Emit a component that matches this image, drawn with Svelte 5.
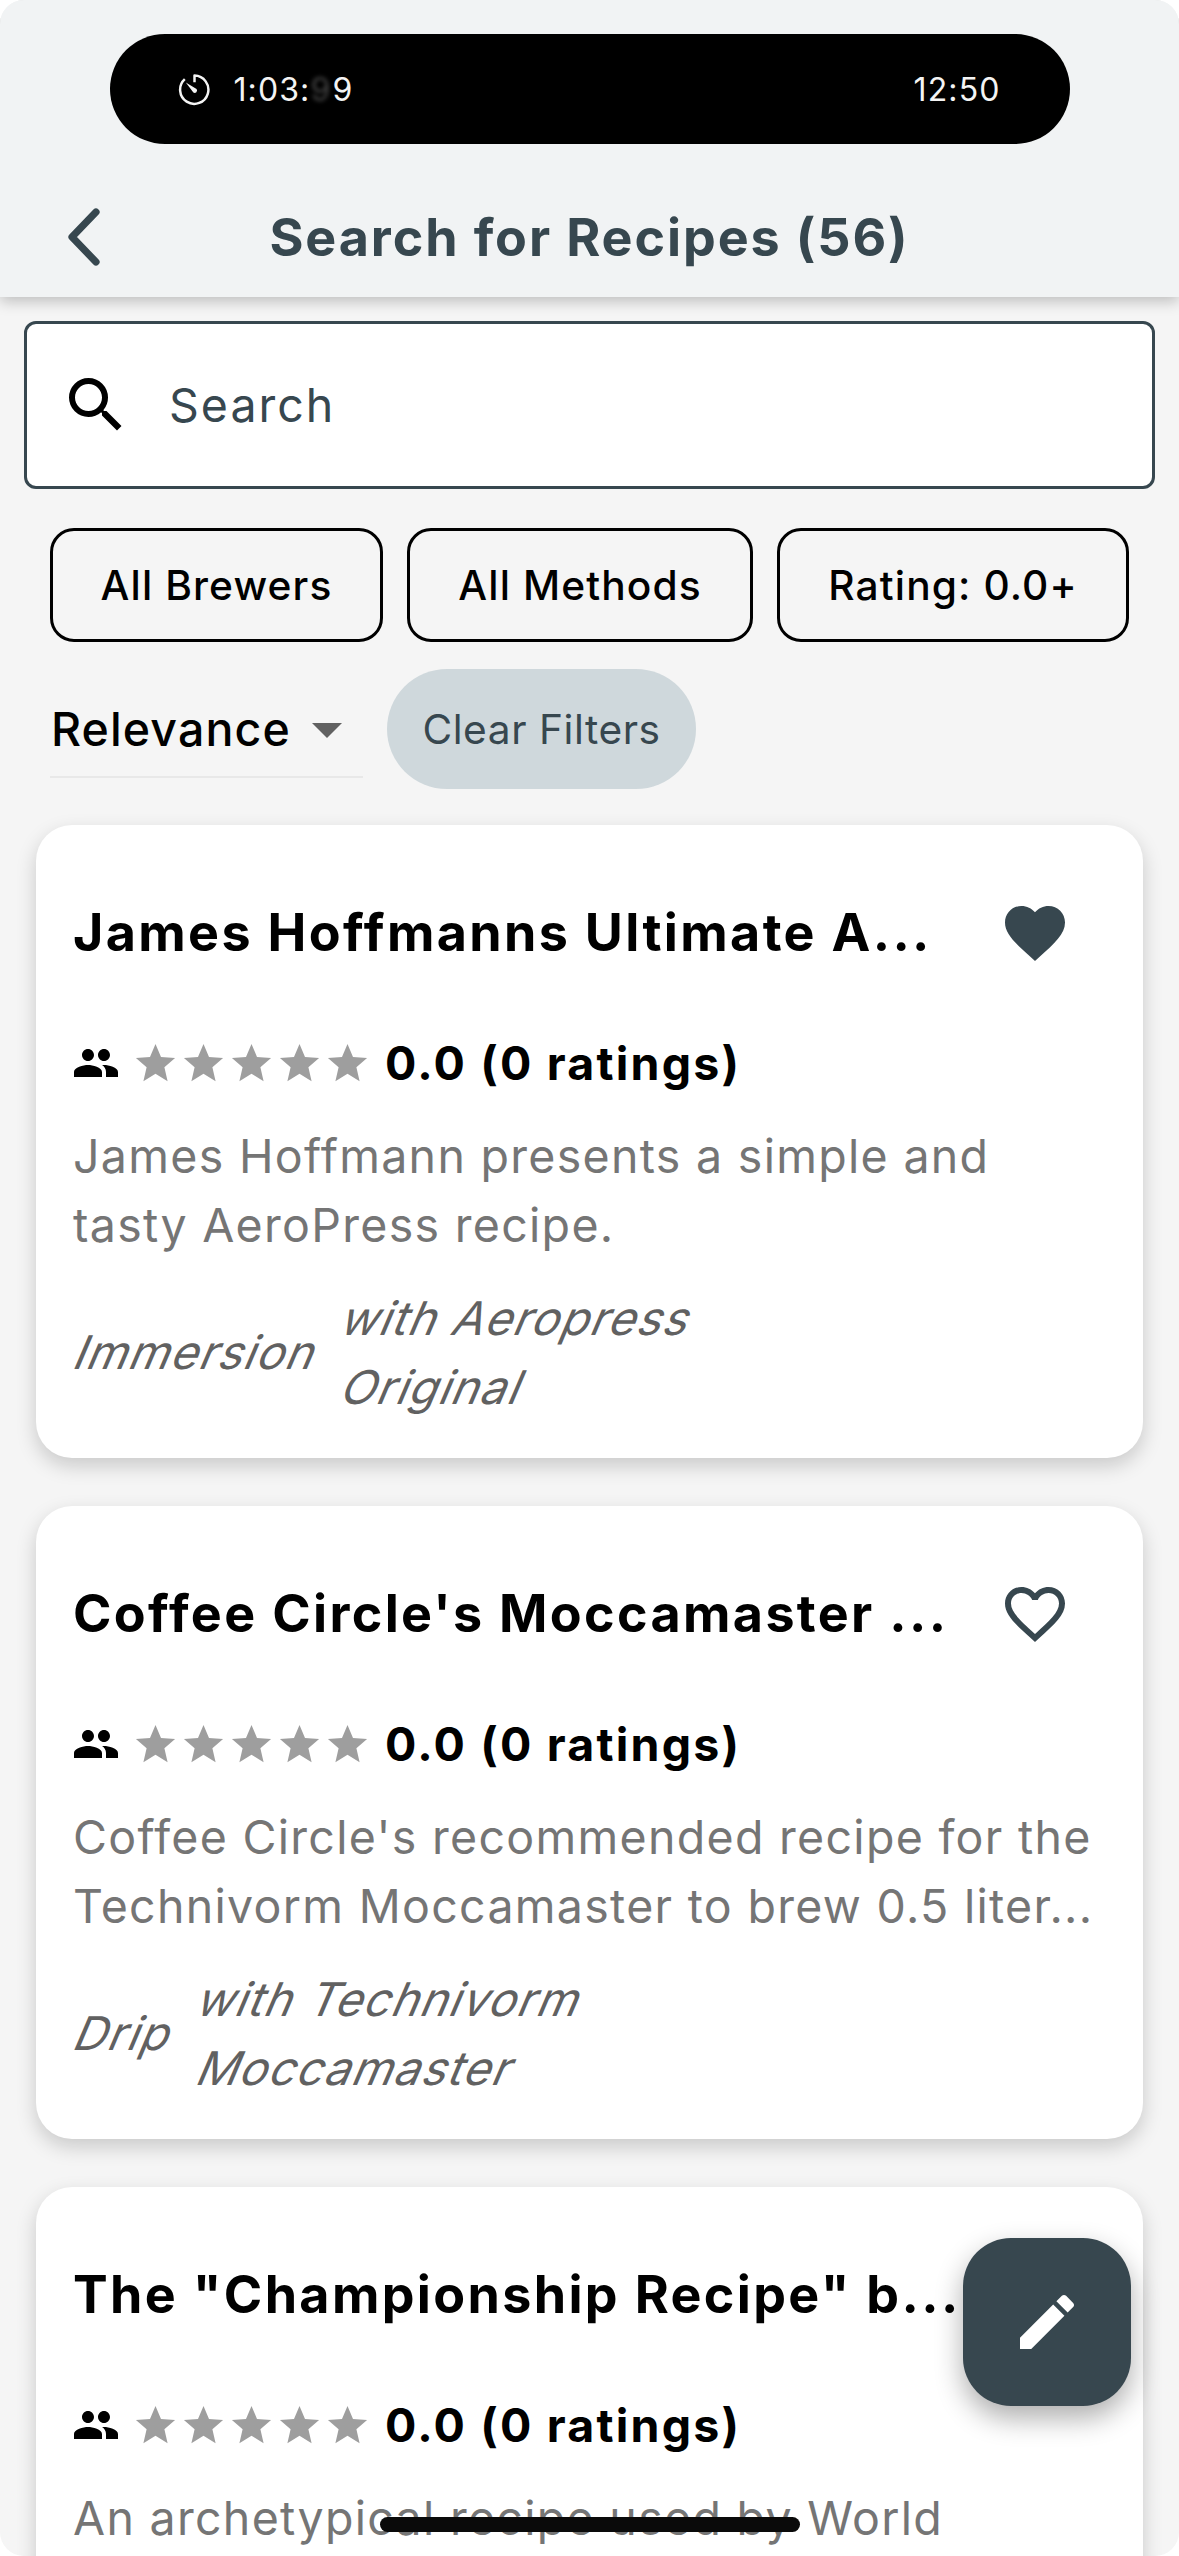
<script>
    let query = ''

    const filters = [
        { name: 'All Brewers', width: 333 },
        { name: 'All Methods', width: 346 },
        { name: 'Rating: 0.0+', width: 352 },
    ]

    const recipes = [
        {
            title: 'James Hoffmanns Ultimate A...',
            liked: true,
            description: ['James Hoffmann presents a simple and', 'tasty AeroPress recipe.'],
            method: 'Immersion',
            brewer: ['with Aeropress', 'Original'],
        },
        {
            title: "Coffee Circle's Moccamaster ...",
            liked: false,
            description: [
                "Coffee Circle's recommended recipe for the",
                'Technivorm Moccamaster to brew 0.5 liter...',
            ],
            method: 'Drip',
            brewer: ['with Technivorm', 'Moccamaster'],
        },
        {
            title: 'The "Championship Recipe" b...',
            liked: false,
            description: ['An archetypical recipe used by World'],
            method: '',
            brewer: [],
        },
    ]
</script>

<div class="screen">
    <header>
        <div class="island">
            <svg class="timer" viewBox="0 0 32 32">
                <path d="M16 9V2.5A13.7 13.7 0 1 1 6.6 6" />
                <path class="hand" d="M7.6 9.3 18 15.6A2.3 2.3 0 0 1 14.9 18.9Z" />
            </svg>
            <span class="elapsed">1:03:<i>9</i>9</span>
            <span class="clock">12:50</span>
        </div>
        <div class="bar">
            <svg class="back" viewBox="0 0 36 60">
                <path d="M30 5 6 30 30 55" />
            </svg>
            <h1>Search for Recipes (56)</h1>
        </div>
    </header>

    <main>
        <label class="search">
            <svg class="icon" viewBox="0 0 24 24">
                <path
                    d="M15.5 14h-.79l-.28-.27A6.471 6.471 0 0 0 16 9.5 6.5 6.5 0 1 0 9.5 16c1.61 0 3.09-.59 4.23-1.57l.27.28v.79l5 4.99L20.49 19l-4.99-5zm-6 0C7.01 14 5 11.99 5 9.5S7.01 5 9.5 5 14 7.01 14 9.5 11.99 14 9.5 14z"
                />
            </svg>
            <input type="text" placeholder="Search" bind:value={query} />
        </label>

        <div class="filters">
            {#each filters as filter}
                <button class="chip" style="width: {filter.width}px">{filter.name}</button>
            {/each}
        </div>

        <div class="sorting">
            <div class="dropdown">
                <span>Relevance</span>
                <svg class="icon" viewBox="0 0 24 24"><path d="M7 10l5 5 5-5z" /></svg>
            </div>
            <button class="clear">Clear Filters</button>
        </div>

        {#each recipes as recipe}
            <article>
                <div class="title">
                    <h2>{recipe.title}</h2>
                    <svg class="icon" viewBox="0 0 24 24">
                        {#if recipe.liked}
                            <path
                                d="M12 21.35l-1.45-1.32C5.4 15.36 2 12.28 2 8.5 2 5.42 4.42 3 7.5 3c1.74 0 3.41.81 4.5 2.09C13.09 3.81 14.76 3 16.5 3 19.58 3 22 5.42 22 8.5c0 3.78-3.4 6.86-8.55 11.54L12 21.35z"
                            />
                        {:else}
                            <path
                                d="M16.5 3c-1.74 0-3.41.81-4.5 2.09C10.91 3.81 9.24 3 7.5 3 4.42 3 2 5.42 2 8.5c0 3.78 3.4 6.86 8.55 11.54L12 21.35l1.45-1.32C18.6 15.36 22 12.28 22 8.5 22 5.42 19.58 3 16.5 3zm-4.4 15.55l-.1.1-.1-.1C7.14 14.24 4 11.39 4 8.5 4 6.5 5.5 5 7.5 5c1.54 0 3.04.99 3.57 2.36h1.87C13.46 5.99 14.96 5 16.5 5c2 0 3.5 1.5 3.5 3.5 0 2.89-3.14 5.74-7.9 10.05z"
                            />
                        {/if}
                    </svg>
                </div>
                <div class="rating">
                    <svg class="people" viewBox="0 0 24 24">
                        <path
                            d="M16 11c1.66 0 2.99-1.34 2.99-3S17.66 5 16 5c-1.66 0-3 1.34-3 3s1.34 3 3 3zm-8 0c1.66 0 2.99-1.34 2.99-3S9.66 5 8 5C6.34 5 5 6.34 5 8s1.34 3 3 3zm0 2c-2.33 0-7 1.17-7 3.5V19h14v-2.5c0-2.33-4.67-3.5-7-3.5zm8 0c-.29 0-.62.02-.97.05 1.16.84 1.97 1.97 1.97 3.45V19h6v-2.5c0-2.33-4.67-3.5-7-3.5z"
                        />
                    </svg>
                    <div class="stars">
                        {#each Array(5) as _}
                            <svg viewBox="0 0 24 24">
                                <path
                                    d="M12 17.27L18.18 21l-1.64-7.03L22 9.24l-7.19-.61L12 2 9.19 8.63 2 9.24l5.46 4.73L5.82 21z"
                                />
                            </svg>
                        {/each}
                    </div>
                    <strong>0.0 (0 ratings)</strong>
                </div>
                <p>
                    {#each recipe.description as line}
                        <span>{line}</span>
                    {/each}
                </p>
                <div class="meta">
                    <em>{recipe.method}</em>
                    <div class="brewer">
                        {#each recipe.brewer as line}
                            <em>{line}</em>
                        {/each}
                    </div>
                </div>
            </article>
        {/each}
    </main>

    <button class="fab" aria-label="Edit">
        <svg class="icon" viewBox="0 0 24 24">
            <path
                d="M3 17.25V21h3.75L17.81 9.94l-3.75-3.75L3 17.25zM20.71 7.04c.39-.39.39-1.02 0-1.41l-2.34-2.34c-.39-.39-1.02-.39-1.41 0l-1.83 1.83 3.75 3.75 1.83-1.83z"
            />
        </svg>
    </button>
    <div class="home"></div>
</div>

<style>
    :global(body) {
        background-color: white;
    }
    .screen {
        position: relative;
        width: 1179px;
        height: 2556px;
        overflow: hidden;
        border-radius: 24px;
        background-color: #f5f5f5;
        font-family: Inter, 'Liberation Sans', sans-serif;
        font-size: 46.5px;
        color: black;
    }
    button {
        font-family: inherit;
        border: none;
        padding: 0;
        margin: 0;
    }
    svg {
        display: block;
        flex: none;
    }
    .icon {
        width: 72px;
        height: 72px;
    }
    header {
        position: relative;
        height: 297px;
        background-color: #f1f3f4;
        box-shadow: 0 4px 14px rgba(0, 0, 0, 0.24);
    }
    header::before {
        content: '';
        display: block;
        height: 34px;
    }
    .island {
        display: flex;
        align-items: center;
        box-sizing: border-box;
        width: 960px;
        height: 110px;
        margin: 0 auto;
        padding: 0 69px 0 68px;
        border-radius: 55px;
        background-color: black;
        color: #f4f4f4;
        font-size: 32px;
        letter-spacing: 1.1px;
    }
    .timer {
        width: 33px;
        height: 33px;
        fill: none;
        stroke: #f4f4f4;
        stroke-width: 2.4;
        stroke-linejoin: round;
    }
    .timer .hand {
        fill: #f4f4f4;
        stroke: none;
    }
    .elapsed {
        margin-left: 23px;
    }
    .elapsed i {
        display: inline-block;
        width: 22px;
        font-style: normal;
        color: #444;
        filter: blur(2px);
    }
    .clock {
        margin-left: auto;
    }
    .bar {
        display: flex;
        align-items: center;
        height: 120px;
        margin-top: 33px;
    }
    .back {
        width: 36px;
        height: 60px;
        margin-left: 66px;
        fill: none;
        stroke: #37474f;
        stroke-width: 7.2;
        stroke-linecap: round;
        stroke-linejoin: round;
    }
    h1 {
        flex: 1;
        margin: 0 102px 0 0;
        text-align: center;
        font-size: 52px;
        font-weight: 700;
        letter-spacing: 1.9px;
        color: #37474f;
    }
    main {
        padding-top: 24px;
    }
    .search {
        display: flex;
        align-items: center;
        box-sizing: border-box;
        height: 168px;
        margin: 0 24px;
        padding-left: 33px;
        border: 3px solid #37474f;
        border-radius: 12px;
        background-color: white;
    }
    input {
        width: 800px;
        margin-left: 37px;
        padding: 0;
        border: none;
        outline: none;
        font-family: inherit;
        font-size: 46.5px;
        letter-spacing: 2px;
    }
    input::placeholder {
        color: #37474f;
    }
    .filters {
        display: flex;
        gap: 24px;
        margin: 39px 50px 0;
    }
    .chip {
        flex: none;
        box-sizing: border-box;
        height: 114px;
        border: 3px solid black;
        border-radius: 24px;
        background: none;
        color: black;
        font-size: 40.7px;
        font-weight: 500;
        letter-spacing: 1.1px;
        white-space: nowrap;
    }
    .sorting {
        display: flex;
        margin: 27px 50px 36px;
    }
    .dropdown {
        display: flex;
        align-items: center;
        justify-content: space-between;
        box-sizing: border-box;
        width: 313px;
        height: 109px;
        padding: 12px 1px 0 1px;
        border-bottom: 2px solid #e8e8e8;
        font-weight: 500;
        letter-spacing: 1.1px;
    }
    .dropdown .icon {
        fill: #616161;
    }
    .clear {
        width: 309px;
        height: 120px;
        margin-left: 24px;
        border-radius: 60px;
        background-color: #cfd8dc;
        color: #37474f;
        font-size: 40.7px;
        letter-spacing: 0.55px;
    }
    article {
        box-sizing: border-box;
        height: 633px;
        margin: 0 36px 48px;
        padding: 36px 38px;
        border-radius: 36px;
        background-color: white;
        box-shadow: 0 8px 20px rgba(0, 0, 0, 0.18);
        white-space: nowrap;
    }
    .title {
        display: flex;
        align-items: center;
        justify-content: space-between;
        height: 144px;
        padding-right: 34px;
    }
    .title .icon {
        fill: #37474f;
    }
    h2 {
        width: 890px;
        margin: 0 0 2px -1px;
        font-size: 52px;
        font-weight: 700;
        letter-spacing: 2.35px;
    }
    .rating {
        display: flex;
        align-items: center;
        height: 72px;
        margin-top: 22px;
    }
    .people {
        width: 48px;
        height: 48px;
        margin-left: -2px;
    }
    .stars {
        display: flex;
        gap: 1px;
        margin-left: 12px;
    }
    .stars svg {
        width: 47px;
        height: 47px;
        fill: #9e9e9e;
    }
    strong {
        margin-left: 14px;
        font-weight: 700;
        letter-spacing: 2.2px;
    }
    p {
        margin: 23px 0 0 -1px;
        line-height: 68.5px;
        letter-spacing: 1.3px;
        color: #757575;
    }
    p span {
        display: block;
    }
    .meta {
        display: flex;
        align-items: center;
        gap: 26px;
        margin: 25px 0 0 -4px;
        line-height: 68.5px;
        letter-spacing: 1.3px;
        color: #616161;
    }
    /* the typeface has only a mild italic, so slant around the baseline instead */
    em {
        display: block;
        font-style: normal;
        transform: skewX(-23deg);
        transform-origin: 0 75%;
    }
    .fab {
        position: absolute;
        right: 48px;
        bottom: 150px;
        display: flex;
        align-items: center;
        justify-content: center;
        width: 168px;
        height: 168px;
        border-radius: 48px;
        background-color: #37474f;
        box-shadow: 0 12px 28px rgba(0, 0, 0, 0.32);
    }
    .fab .icon {
        fill: white;
    }
    .home {
        position: absolute;
        left: 380px;
        bottom: 24px;
        width: 420px;
        height: 15px;
        border-radius: 8px;
        background-color: #0a0a0a;
    }
</style>
